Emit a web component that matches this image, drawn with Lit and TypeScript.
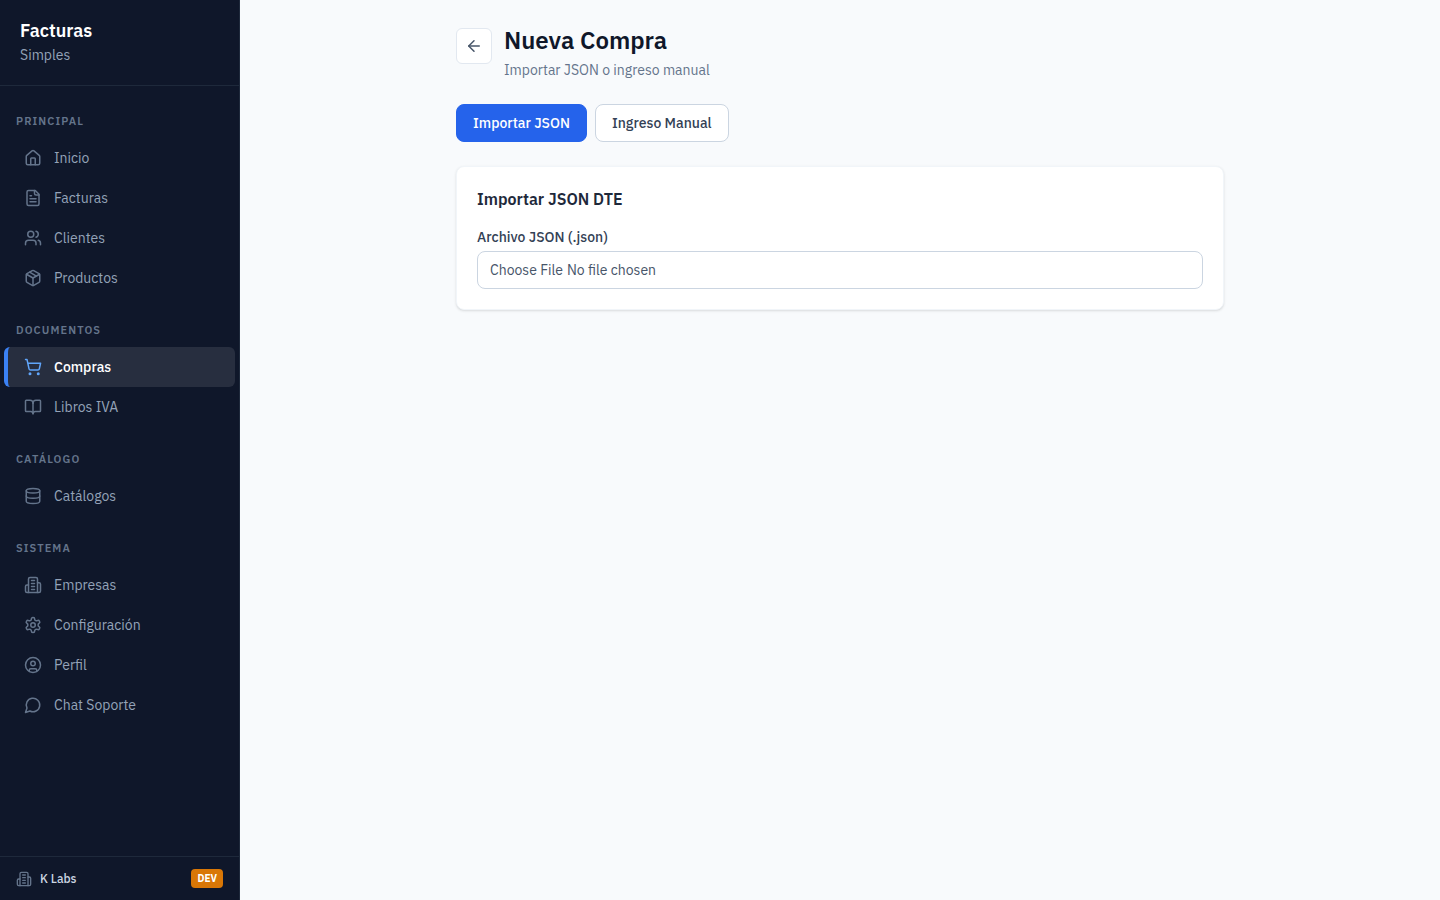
import { LitElement, html, css, svg, type SVGTemplateResult } from "lit";
import { customElement, state } from "lit/decorators.js";
import { classMap } from "lit/directives/class-map.js";

const icons: Record<string, SVGTemplateResult> = {
  home: svg`<path d="M15 21v-8a1 1 0 0 0-1-1h-4a1 1 0 0 0-1 1v8"/><path d="M3 10a2 2 0 0 1 .709-1.528l7-5.999a2 2 0 0 1 2.582 0l7 5.999A2 2 0 0 1 21 10v9a2 2 0 0 1-2 2H5a2 2 0 0 1-2-2z"/>`,
  file: svg`<path d="M15 2H6a2 2 0 0 0-2 2v16a2 2 0 0 0 2 2h12a2 2 0 0 0 2-2V7Z"/><path d="M14 2v4a2 2 0 0 0 2 2h4"/><path d="M10 9H8"/><path d="M16 13H8"/><path d="M16 17H8"/>`,
  users: svg`<path d="M16 21v-2a4 4 0 0 0-4-4H6a4 4 0 0 0-4 4v2"/><circle cx="9" cy="7" r="4"/><path d="M22 21v-2a4 4 0 0 0-3-3.87"/><path d="M16 3.13a4 4 0 0 1 0 7.75"/>`,
  box: svg`<path d="M11 21.73a2 2 0 0 0 2 0l7-4A2 2 0 0 0 21 16V8a2 2 0 0 0-1-1.73l-7-4a2 2 0 0 0-2 0l-7 4A2 2 0 0 0 3 8v8a2 2 0 0 0 1 1.73z"/><path d="M12 22V12"/><path d="m3.3 7 8.7 5 8.7-5"/><path d="m7.5 4.27 9 5.15"/>`,
  cart: svg`<circle cx="8" cy="21" r="1"/><circle cx="19" cy="21" r="1"/><path d="M2.05 2.05h2l2.66 12.42a2 2 0 0 0 2 1.58h9.78a2 2 0 0 0 1.95-1.57l1.65-7.43H5.12"/>`,
  book: svg`<path d="M12 7v14"/><path d="M3 18a1 1 0 0 1-1-1V4a1 1 0 0 1 1-1h5a4 4 0 0 1 4 4 4 4 0 0 1 4-4h5a1 1 0 0 1 1 1v13a1 1 0 0 1-1 1h-6a3 3 0 0 0-3 3 3 3 0 0 0-3-3z"/>`,
  database: svg`<ellipse cx="12" cy="5" rx="9" ry="3"/><path d="M3 5v14a9 3 0 0 0 18 0V5"/><path d="M3 12a9 3 0 0 0 18 0"/>`,
  building: svg`<path d="M6 22V4a2 2 0 0 1 2-2h8a2 2 0 0 1 2 2v18Z"/><path d="M6 12H4a2 2 0 0 0-2 2v6a2 2 0 0 0 2 2h2"/><path d="M18 9h2a2 2 0 0 1 2 2v9a2 2 0 0 1-2 2h-2"/><path d="M10 6h4"/><path d="M10 10h4"/><path d="M10 14h4"/><path d="M10 18h4"/>`,
  settings: svg`<path d="M12.22 2h-.44a2 2 0 0 0-2 2v.18a2 2 0 0 1-1 1.73l-.43.25a2 2 0 0 1-2 0l-.15-.08a2 2 0 0 0-2.73.73l-.22.38a2 2 0 0 0 .73 2.73l.15.1a2 2 0 0 1 1 1.72v.51a2 2 0 0 1-1 1.74l-.15.09a2 2 0 0 0-.73 2.73l.22.38a2 2 0 0 0 2.73.73l.15-.08a2 2 0 0 1 2 0l.43.25a2 2 0 0 1 1 1.73V20a2 2 0 0 0 2 2h.44a2 2 0 0 0 2-2v-.18a2 2 0 0 1 1-1.73l.43-.25a2 2 0 0 1 2 0l.15.08a2 2 0 0 0 2.73-.73l.22-.39a2 2 0 0 0-.73-2.73l-.15-.08a2 2 0 0 1-1-1.74v-.5a2 2 0 0 1 1-1.74l.15-.09a2 2 0 0 0 .73-2.73l-.22-.38a2 2 0 0 0-2.73-.73l-.15.08a2 2 0 0 1-2 0l-.43-.25a2 2 0 0 1-1-1.73V4a2 2 0 0 0-2-2z"/><circle cx="12" cy="12" r="3"/>`,
  user: svg`<circle cx="12" cy="12" r="10"/><circle cx="12" cy="10" r="3"/><path d="M7 20.662V19a2 2 0 0 1 2-2h6a2 2 0 0 1 2 2v1.662"/>`,
  chat: svg`<path d="M7.9 20A9 9 0 1 0 4 16.1L2 22Z"/>`,
  back: svg`<path d="m12 19-7-7 7-7"/><path d="M19 12H5"/>`,
};

const icon = (name: string, size: number) => html`
  <svg width=${size} height=${size} viewBox="0 0 24 24" fill="none" stroke="currentColor"
    stroke-width="2" stroke-linecap="round" stroke-linejoin="round" aria-hidden="true">${icons[name]}</svg>`;

const sections = [
  { title: "Principal", items: [["home", "Inicio"], ["file", "Facturas"], ["users", "Clientes"], ["box", "Productos"]] },
  { title: "Documentos", items: [["cart", "Compras"], ["book", "Libros IVA"]] },
  { title: "Catálogo", items: [["database", "Catálogos"]] },
  { title: "Sistema", items: [["building", "Empresas"], ["settings", "Configuración"], ["user", "Perfil"], ["chat", "Chat Soporte"]] },
];

@customElement("app-sidebar")
export class AppSidebar extends LitElement {
  static styles = css`
    :host {
      display: flex;
      flex-direction: column;
      box-sizing: border-box;
      background: #0f172a;
      border-right: 1px solid #1e293b;
    }
    svg { display: block; flex: none; }
    .brand {
      padding: 20px;
      border-bottom: 1px solid #1e293b;
    }
    .name {
      font-size: 18px;
      line-height: 22px;
      font-weight: 600;
      color: #ffffff;
    }
    .tagline {
      margin-top: 3px;
      font-size: 14px;
      line-height: 20px;
      color: #94a3b8;
    }
    .nav {
      flex: 1;
      overflow-y: auto;
      padding: 3px 4px;
    }
    .title {
      margin: 24px 12px 8px;
      font-size: 11px;
      line-height: 17px;
      font-weight: 600;
      letter-spacing: 0.1em;
      text-transform: uppercase;
      color: #64748b;
    }
    .list { list-style: none; margin: 0; padding: 0; }
    .item {
      display: flex;
      align-items: center;
      gap: 12px;
      height: 40px;
      box-sizing: border-box;
      padding: 0 16px;
      border-left: 4px solid transparent;
      border-radius: 6px;
      font-size: 14px;
      line-height: 20px;
      color: #94a3b8;
      text-decoration: none;
    }
    .item svg { color: #64748b; }
    .item:hover { color: #ffffff; }
    .item.active {
      background: rgba(255, 255, 255, 0.1);
      border-left-color: #3b82f6;
      font-weight: 500;
      color: #ffffff;
    }
    .item.active svg { color: #60a5fa; }
    .footer {
      display: flex;
      align-items: center;
      gap: 8px;
      padding: 12px 16px;
      border-top: 1px solid #1e293b;
      font-size: 12px;
      line-height: 19px;
      color: #cbd5e1;
    }
    .footer svg { color: #64748b; }
    .company { flex: 1; font-weight: 500; line-height: 18px; }
    .badge {
      padding: 0 6px;
      border-radius: 4px;
      background: #d97706;
      font-size: 10px;
      font-weight: 700;
      color: #ffffff;
    }
  `;

  render() {
    return html`
      <header class="brand">
        <div class="name">Facturas</div>
        <div class="tagline">Simples</div>
      </header>
      <nav class="nav">
        ${sections.map(s => html`
          <div class="title">${s.title}</div>
          <ul class="list">
            ${s.items.map(([glyph, label]) => html`
              <li><a href="#" class=${classMap({ item: true, active: label === "Compras" })}>${icon(glyph, 18)}<span>${label}</span></a></li>`)}
          </ul>`)}
      </nav>
      <footer class="footer">
        ${icon("building", 16)}
        <span class="company">K Labs</span>
        <span class="badge">DEV</span>
      </footer>`;
  }
}

@customElement("app-root")
export class AppRoot extends LitElement {
  @state() private mode: "json" | "manual" = "json";

  static styles = css`
    :host {
      display: grid;
      grid-template-columns: 240px minmax(0, 1fr);
      min-height: 100vh;
      background: #f8fafc;
      color: #0f172a;
      font-family: "IBM Plex Sans", "Noto Sans", sans-serif;
      font-size: 14px;
      line-height: 20px;
    }
    .sidebar { position: sticky; top: 0; height: 100vh; }
    .main { padding: 24px; }
    .page { max-width: 768px; margin: 0 auto; }
    .head { display: flex; align-items: flex-start; gap: 12px; }
    .back {
      display: grid;
      place-items: center;
      width: 36px;
      height: 36px;
      margin: 4px 0 0;
      padding: 0;
      border: 1px solid #e2e8f0;
      border-radius: 6px;
      background: #ffffff;
      color: #475569;
    }
    .heading { margin: 0; font-size: 24px; line-height: 32px; font-weight: 600; }
    .sub { margin: 4px 0 0; color: #64748b; }
    .tabs { display: flex; gap: 8px; margin: 24px 0; }
    .tab {
      padding: 8px 16px;
      border: 1px solid #cbd5e1;
      border-radius: 8px;
      background: #ffffff;
      color: #334155;
      font: inherit;
      font-weight: 500;
    }
    .tab.selected { background: #2563eb; border-color: #2563eb; color: #ffffff; }
    .card {
      padding: 20px;
      border: 1px solid #f1f5f9;
      border-radius: 8px;
      background: #ffffff;
      box-shadow: 0 1px 3px rgba(0, 0, 0, 0.1), 0 1px 2px -1px rgba(0, 0, 0, 0.1);
    }
    .card-title { margin: 0 0 16px; font-size: 16px; line-height: 24px; font-weight: 600; color: #1e293b; }
    .label { display: block; margin-bottom: 4px; font-weight: 500; color: #334155; }
    .file {
      display: block;
      box-sizing: border-box;
      width: 100%;
      padding: 8px 12px;
      border: 1px solid #cbd5e1;
      border-radius: 8px;
      background: #ffffff;
      font: inherit;
      color: #475569;
    }
    .file::file-selector-button {
      margin: 0 4px 0 0;
      padding: 0;
      border: 0;
      background: transparent;
      font: inherit;
      color: inherit;
    }
  `;

  private tab(id: "json" | "manual", label: string) {
    return html`<button type="button" class=${classMap({ tab: true, selected: this.mode === id })}
      @click=${() => (this.mode = id)}>${label}</button>`;
  }

  render() {
    return html`
      <app-sidebar class="sidebar"></app-sidebar>
      <main class="main">
        <div class="page">
          <header class="head">
            <button type="button" class="back" aria-label="Volver">${icon("back", 18)}</button>
            <div>
              <h1 class="heading">Nueva Compra</h1>
              <p class="sub">Importar JSON o ingreso manual</p>
            </div>
          </header>
          <div class="tabs">
            ${this.tab("json", "Importar JSON")}
            ${this.tab("manual", "Ingreso Manual")}
          </div>
          <section class="card">
            <h2 class="card-title">Importar JSON DTE</h2>
            <label class="label" for="archivo">Archivo JSON (.json)</label>
            <input class="file" id="archivo" type="file" accept=".json" />
          </section>
        </div>
      </main>`;
  }
}
